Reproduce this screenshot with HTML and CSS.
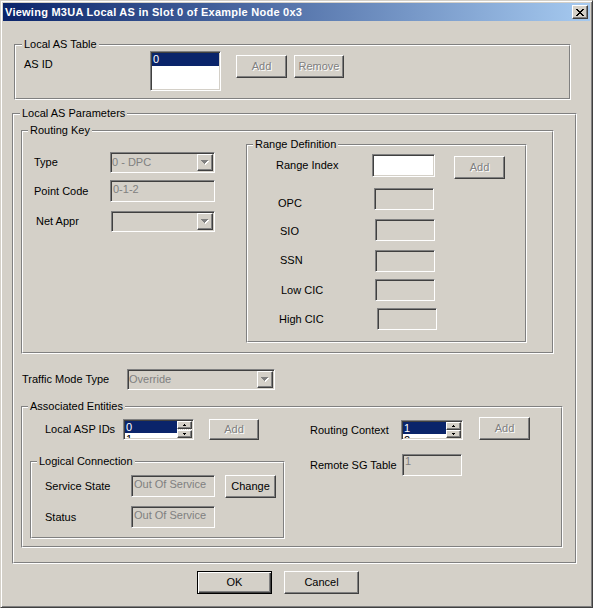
FILE: index.html
```html
<!DOCTYPE html>
<html>
<head>
<meta charset="utf-8">
<title>Viewing M3UA Local AS</title>
<link rel="stylesheet" href="styles.css">
</head>
<body>
<div class="window">
  <div class="titlebar">
    <span class="title">Viewing M3UA Local AS in Slot 0 of Example Node 0x3</span>
    <div class="btn close"><svg width="8" height="7" viewBox="0 0 8 7" shape-rendering="crispEdges"><path d="M0 0h2v1H0zM6 0h2v1H6zM1 1h2v1H1zM5 1h2v1H5zM2 2h4v1H2zM3 3h2v1H3zM2 4h4v1H2zM1 5h2v1H1zM5 5h2v1H5zM0 6h2v1H0zM6 6h2v1H6z" fill="#000"/></svg></div>
  </div>
  <div class="client">
    <div class="grp g-table"><div class="gin">
      <div class="legend lg6">Local AS Table</div>
      <div class="row">
        <div class="lbl l-asid">AS ID</div>
        <div class="field white asid-list"><div class="item sel">0</div></div>
        <div class="btn dis b-add1">Add</div>
        <div class="btn dis b-remove">Remove</div>
      </div>
    </div></div>

    <div class="grp g-params"><div class="gin">
      <div class="legend lg6">Local AS Parameters</div>

      <div class="grp g-rk"><div class="gin">
        <div class="legend">Routing Key</div>
        <div class="rk-body">
          <div class="rk-left">
            <div class="row r-type">
              <div class="lbl l-type">Type</div>
              <div class="field select s-type"><span class="val dis">0 - DPC</span><span class="btn dd"><svg width="8" height="5" viewBox="0 0 8 5" shape-rendering="crispEdges"><path d="M1 1h7v1H1zM2 2h5v1H2zM3 3h3v1H3zM4 4h1v1H4z" fill="#fff"/><path d="M0 0h7v1H0zM1 1h5v1H1zM2 2h3v1H2zM3 3h1v1H3z" fill="#808080"/></svg></span></div>
            </div>
            <div class="row r-pc">
              <div class="lbl l-pc">Point Code</div>
              <div class="field i-pc"><div class="ftxt dis">0-1-2</div></div>
            </div>
            <div class="row r-net">
              <div class="lbl l-net">Net Appr</div>
              <div class="field select s-net"><span class="val dis"></span><span class="btn dd"><svg width="8" height="5" viewBox="0 0 8 5" shape-rendering="crispEdges"><path d="M1 1h7v1H1zM2 2h5v1H2zM3 3h3v1H3zM4 4h1v1H4z" fill="#fff"/><path d="M0 0h7v1H0zM1 1h5v1H1zM2 2h3v1H2zM3 3h1v1H3z" fill="#808080"/></svg></span></div>
            </div>
          </div>

          <div class="grp g-range"><div class="gin">
            <div class="legend">Range Definition</div>
            <div class="row rr1">
              <div class="lbl l-ri">Range Index</div>
              <div class="field white i-ri"></div>
              <div class="btn dis b-add2">Add</div>
            </div>
            <div class="row rr2">
              <div class="lbl l-opc">OPC</div>
              <div class="field i-r"></div>
            </div>
            <div class="row rr3">
              <div class="lbl l-sio">SIO</div>
              <div class="field i-r"></div>
            </div>
            <div class="row rr4">
              <div class="lbl l-ssn">SSN</div>
              <div class="field i-r"></div>
            </div>
            <div class="row rr5">
              <div class="lbl l-low">Low CIC</div>
              <div class="field i-r"></div>
            </div>
            <div class="row rr6">
              <div class="lbl l-high">High CIC</div>
              <div class="field i-r"></div>
            </div>
          </div></div>
        </div>
      </div></div>

      <div class="row r-tm">
        <div class="lbl l-tm">Traffic Mode Type</div>
        <div class="field select s-tm"><span class="val dis">Override</span><span class="btn dd"><svg width="8" height="5" viewBox="0 0 8 5" shape-rendering="crispEdges"><path d="M1 1h7v1H1zM2 2h5v1H2zM3 3h3v1H3zM4 4h1v1H4z" fill="#fff"/><path d="M0 0h7v1H0zM1 1h5v1H1zM2 2h3v1H2zM3 3h1v1H3z" fill="#808080"/></svg></span></div>
      </div>

      <div class="grp g-assoc"><div class="gin">
        <div class="legend">Associated Entities</div>
        <div class="as-body">
          <div class="as-left">
            <div class="row r-asp">
              <div class="lbl l-asp">Local ASP IDs</div>
              <div class="field white spin sp-asp">
                <div class="items"><div class="item sel">0</div><div class="item">1</div></div>
                <div class="sbar">
                  <div class="btn sb"><svg width="3" height="2" viewBox="0 0 3 2" shape-rendering="crispEdges"><path d="M1 0h1v1H1zM0 1h3v1H0z" fill="#000"/></svg></div>
                  <div class="track"></div>
                  <div class="btn sb"><svg width="3" height="2" viewBox="0 0 3 2" shape-rendering="crispEdges"><path d="M0 0h3v1H0zM1 1h1v1H1z" fill="#000"/></svg></div>
                </div>
              </div>
              <div class="btn dis b-add3">Add</div>
            </div>

            <div class="grp g-logic"><div class="gin">
              <div class="legend">Logical Connection</div>
              <div class="row r-ss">
                <div class="lbl l-ss">Service State</div>
                <div class="field i-ss"><div class="ftxt dis">Out Of Service</div></div>
                <div class="btn b-change">Change</div>
              </div>
              <div class="row r-st">
                <div class="lbl l-ss">Status</div>
                <div class="field i-ss"><div class="ftxt dis">Out Of Service</div></div>
              </div>
            </div></div>
          </div>

          <div class="as-right">
            <div class="row r-rc">
              <div class="lbl l-rc">Routing Context</div>
              <div class="field white spin sp-rc">
                <div class="items"><div class="item sel">1</div><div class="item">2</div></div>
                <div class="sbar">
                  <div class="btn sb"><svg width="3" height="2" viewBox="0 0 3 2" shape-rendering="crispEdges"><path d="M1 0h1v1H1zM0 1h3v1H0z" fill="#000"/></svg></div>
                  <div class="track"></div>
                  <div class="btn sb"><svg width="3" height="2" viewBox="0 0 3 2" shape-rendering="crispEdges"><path d="M0 0h3v1H0zM1 1h1v1H1z" fill="#000"/></svg></div>
                </div>
              </div>
              <div class="btn dis b-add4">Add</div>
            </div>
            <div class="row r-sg">
              <div class="lbl l-sg">Remote SG Table</div>
              <div class="field i-sg"><div class="ftxt sgtxt dis">1</div></div>
            </div>
          </div>
        </div>
      </div></div>
    </div></div>

    <div class="bottom">
      <div class="btn def b-ok">OK</div>
      <div class="btn b-cancel">Cancel</div>
    </div>
  </div>
</div>
</body>
</html>
```

FILE: styles.css
```css
* { box-sizing: border-box; margin: 0; padding: 0; }
html, body { width: 593px; height: 608px; }
body {
  background: #d4d0c8;
  font-family: "Liberation Sans", Arial, sans-serif;
  font-size: 11px;
  line-height: 13px;
  color: #000;
  overflow: hidden;
}
.window {
  width: 593px;
  height: 608px;
  border: 1px solid;
  border-color: #d4d0c8 #404040 #404040 #d4d0c8;
  box-shadow: inset 1px 1px #fff, inset -1px -1px #808080;
  padding: 2px;
}
.titlebar {
  height: 18px;
  display: flex;
  align-items: center;
  justify-content: space-between;
  background: linear-gradient(to right, #0a246a, #a6caf0);
  color: #fff;
  font-weight: bold;
  padding: 0 2px;
  white-space: nowrap;
}
.title { letter-spacing: 0.25px; }
.close { width: 16px; height: 14px; }

.row { display: flex; align-items: flex-start; }
.lbl { flex: none; white-space: nowrap; }

.btn {
  flex: none;
  display: flex;
  align-items: center;
  justify-content: center;
  background: #d4d0c8;
  border: 1px solid;
  border-color: #fff #404040 #404040 #fff;
  box-shadow: inset -1px -1px #808080;
  color: #000;
  white-space: nowrap;
}
.dis { color: #808080; }
.btn.dis { text-shadow: 1px 1px 0 #fff; }
.btn.def {
  border-color: #000;
  box-shadow: inset 1px 1px #fff, inset -1px -1px #404040, inset -2px -2px #808080;
}

.field {
  flex: none;
  border: 1px solid;
  border-color: #808080 #fff #fff #808080;
  box-shadow: inset 1px 1px #404040, inset -1px -1px #d4d0c8;
  background: #d4d0c8;
  padding: 1px;
  overflow: hidden;
  white-space: nowrap;
}
.field.white { background: #fff; }
.ftxt { padding: 1px 0 0 1px; line-height: 13px; }
.sgtxt { padding-top: 0; line-height: 10px; }

.item { height: 13px; line-height: 13px; padding-left: 1px; }
.item.sel { background: #0a246a; color: #fff; }

.select { display: flex; }
.select .val { flex: 1; line-height: 17px; overflow: hidden; }
.dd { width: 16px; height: 17px; }

.spin { display: flex; }
.spin .items { flex: 1; height: 100%; overflow: hidden; }
.spin .item { height: 12px; line-height: 12px; }
.sbar { width: 15px; flex: none; display: flex; flex-direction: column; }
.sb { height: 8px; }
.track { height: 1px; background: repeating-linear-gradient(to right, #fff 0 1px, #d4d0c8 1px 2px); }

.grp {
  flex: none;
  border: 1px solid;
  border-color: #808080 #fff #fff #808080;
}
.gin {
  height: 100%;
  border: 1px solid;
  border-color: #fff #808080 #808080 #fff;
}
.legend {
  width: max-content;
  height: 13px;
  margin: -8px 0 0 5px;
  padding: 0 2px;
  background: #d4d0c8;
  white-space: nowrap;
}
.legend.lg6 { margin-left: 6px; }

/* Local AS Table */
.g-table { margin: 23px 0 0 11px; width: 557px; height: 56px; }
.l-asid { margin: 7px 0 0 8px; width: 126px; }
.asid-list { width: 71px; height: 40px; }
.b-add1 { margin: 4px 0 0 15px; width: 51px; height: 23px; }
.b-remove { margin: 4px 0 0 7px; width: 50px; height: 23px; }

/* Local AS Parameters */
.g-params { margin: 13px 0 0 9px; width: 565px; height: 451px; }
.g-rk { margin: 10px 0 0 7px; width: 533px; height: 224px; }
.rk-body { display: flex; align-items: flex-start; }
.rk-left { margin-left: 11px; width: 181px; flex: none; }
.r-type { margin-top: 15px; }
.l-type { width: 76px; line-height: 21px; }
.s-type { width: 105px; height: 21px; }
.r-pc { margin-top: 7px; }
.l-pc { width: 76px; line-height: 22px; }
.i-pc { width: 105px; height: 22px; }
.r-net { margin-top: 9px; }
.l-net { margin-left: 2px; width: 75px; line-height: 21px; }
.s-net { width: 104px; height: 21px; }

.g-range { margin: 7px 0 0 31px; width: 281px; height: 199px; }
.rr1 { margin-top: 3px; }
.l-ri { margin-left: 28px; width: 96px; line-height: 23px; }
.i-ri { width: 63px; height: 23px; }
.b-add2 { margin: 2px 0 0 19px; width: 51px; height: 23px; }
.i-r { width: 60px; height: 22px; }
.rr2 { margin-top: 9px; }
.l-opc { margin: 4px 0 0 30px; width: 96px; height: 18px; line-height: 22px; }
.rr3 { margin-top: 9px; }
.l-sio { margin: 1px 0 0 32px; width: 95px; height: 21px; line-height: 22px; }
.rr4 { margin-top: 9px; }
.l-ssn { margin-left: 32px; width: 95px; line-height: 21px; }
.rr5 { margin-top: 7px; }
.l-low { margin-left: 33px; width: 94px; line-height: 22px; }
.rr6 { margin-top: 7px; }
.l-high { margin-left: 31px; width: 98px; line-height: 22px; }

.r-tm { margin-top: 15px; }
.l-tm { margin-left: 8px; width: 105px; line-height: 21px; }
.s-tm { width: 148px; height: 21px; }

/* Associated Entities */
.g-assoc { margin: 16px 0 0 7px; width: 542px; height: 142px; }
.as-body { display: flex; align-items: flex-start; }
.as-left { width: 262px; flex: none; }
.r-asp { margin-top: 6px; }
.l-asp { margin-left: 22px; width: 78px; line-height: 21px; }
.sp-asp { width: 71px; height: 21px; }
.b-add3 { margin-left: 15px; width: 50px; height: 21px; }
.g-logic { margin: 21px 0 0 7px; width: 255px; height: 78px; }
.r-ss { margin-top: 7px; }
.l-ss { margin-left: 13px; width: 86px; line-height: 22px; }
.i-ss { width: 84px; height: 22px; }
.b-change { margin-left: 10px; width: 51px; height: 23px; }
.r-st { margin-top: 8px; }

.as-right { margin-left: 25px; flex: none; }
.r-rc { margin-top: 4px; }
.l-rc { margin-top: 3px; width: 91px; line-height: 21px; }
.sp-rc { margin-top: 3px; width: 62px; height: 20px; }
.sp-rc .sb { height: 8px; }
.sp-rc .track { height: 0; }
.b-add4 { margin-left: 16px; width: 51px; height: 23px; }
.r-sg { margin-top: 13px; }
.l-sg { width: 92px; line-height: 22px; }
.i-sg { width: 60px; height: 22px; }

/* bottom buttons */
.bottom { display: flex; margin-top: 7px; }
.b-ok { margin-left: 194px; width: 75px; height: 23px; }
.b-cancel { margin-left: 12px; width: 75px; height: 23px; }
```
